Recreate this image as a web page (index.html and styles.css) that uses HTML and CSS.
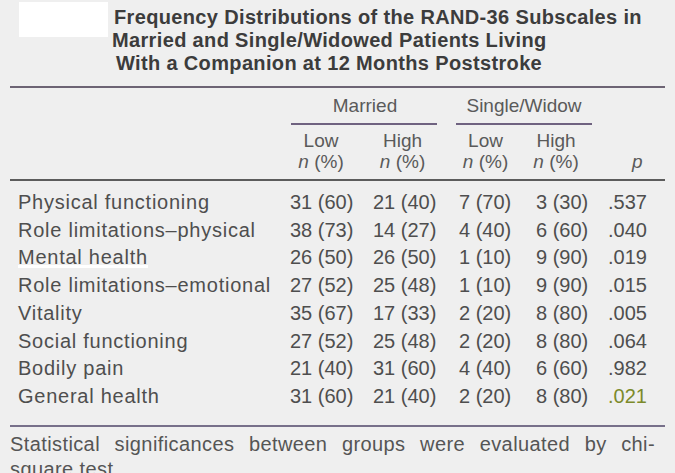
FILE: index.html
```html
<!DOCTYPE html>
<html>
<head>
<meta charset="utf-8">
<link rel="stylesheet" href="styles.css">
</head>
<body>
<div class="page">
  <header class="head">
    <div class="blank"></div>
    <h1 class="title"><span class="t1">Frequency Distributions of the RAND-36 Subscales in</span><br><span class="t2">Married and Single/Widowed Patients Living</span><br><span class="t3">With a Companion at 12 Months Poststroke</span></h1>
  </header>
  <table class="tbl">
    <colgroup>
      <col class="c-label"><col class="c1"><col class="c2"><col class="c3"><col class="c4"><col class="cp">
    </colgroup>
    <thead>
      <tr class="grp">
        <th></th>
        <th colspan="2"><div class="grp-m">Married</div></th>
        <th colspan="2"><div class="grp-s">Single/Widow</div></th>
        <th></th>
      </tr>
      <tr class="sub">
        <th></th>
        <th class="h1">Low<br><i>n</i> (%)</th>
        <th class="h2">High<br><i>n</i> (%)</th>
        <th class="h3">Low<br><i>n</i> (%)</th>
        <th class="h4">High<br><i>n</i> (%)</th>
        <th class="hp"><br><i>p</i></th>
      </tr>
    </thead>
    <tbody>
      <tr><td>Physical functioning</td><td>31 (60)</td><td>21 (40)</td><td>7 (70)</td><td>3 (30)</td><td>.537</td></tr>
      <tr><td>Role limitations–physical</td><td>38 (73)</td><td>14 (27)</td><td>4 (40)</td><td>6 (60)</td><td>.040</td></tr>
      <tr><td><span class="hl">Mental health</span></td><td>26 (50)</td><td>26 (50)</td><td>1 (10)</td><td>9 (90)</td><td>.019</td></tr>
      <tr><td>Role limitations–emotional</td><td>27 (52)</td><td>25 (48)</td><td>1 (10)</td><td>9 (90)</td><td>.015</td></tr>
      <tr><td>Vitality</td><td>35 (67)</td><td>17 (33)</td><td>2 (20)</td><td>8 (80)</td><td>.005</td></tr>
      <tr><td>Social functioning</td><td>27 (52)</td><td>25 (48)</td><td>2 (20)</td><td>8 (80)</td><td>.064</td></tr>
      <tr><td>Bodily pain</td><td>21 (40)</td><td>31 (60)</td><td>4 (40)</td><td>6 (60)</td><td>.982</td></tr>
      <tr><td>General health</td><td>31 (60)</td><td>21 (40)</td><td>2 (20)</td><td>8 (80)</td><td><span class="hl2">.021</span></td></tr>
    </tbody>
  </table>
  <p class="note">Statistical significances between groups were evaluated by chi-square test.</p>
</div>
</body>
</html>
```
FILE: styles.css
```css
html, body {
  margin: 0;
  padding: 0;
}
body {
  background: #efefef;
  width: 675px;
  height: 473px;
  overflow: hidden;
  font-family: "Liberation Sans", Arial, sans-serif;
  color: #4e4e4e;
}
.page {
  padding: 0 10px;
}
.head {
  display: flex;
  align-items: flex-start;
  height: 86px;
}
.blank {
  width: 89px;
  height: 35px;
  margin: 2px 0 0 9px;
  background: #ffffff;
  flex: none;
}
.title {
  margin: 6px 0 0 6px;
  font-family: "Liberation Sans", sans-serif;
  font-weight: bold;
  font-size: 20px;
  line-height: 23px;
  color: #3c3c3c;
  letter-spacing: 0.35px;
}
.t2 { margin-left: -2px; }
.t3 { margin-left: 2px; }
.tbl {
  width: 655px;
  border-collapse: collapse;
  table-layout: fixed;
  border-top: 2px solid #6d6474;
  border-bottom: 2px solid #77708a;
}
.c-label { width: 272px; }
.c1 { width: 83px; }
.c2 { width: 86px; }
.c3 { width: 77px; }
.c4 { width: 72px; }
.cp { width: 65px; }

thead th {
  font-weight: normal;
  font-size: 19px;
  color: #5a5a5a;
  padding: 0;
}
thead i {
  font-style: italic;
}
.grp th {
  padding-top: 7px;
  vertical-align: bottom;
}
.grp-m, .grp-s {
  text-align: center;
  line-height: 22px;
  padding-bottom: 6px;
  border-bottom: 2px solid #6f6280;
}
.grp-m {
  margin: 0 14px 0 9px;
  padding-left: 2px;
}
.grp-s {
  margin: 0 8px 0 5px;
}
.sub th {
  line-height: 21px;
  padding-top: 5px;
  padding-bottom: 7px;
  text-align: center;
  border-bottom: 2px solid #5c5c5c;
}
.sub .h1 { padding-left: 8px; padding-right: 13px; }
.sub .h2 { padding-left: 7px; padding-right: 18px; }
.sub .h3 { padding-left: 8px; padding-right: 16px; }
.sub .h4 { padding-left: 4px; padding-right: 20px; }
.sub .hp { text-align: left; padding-left: 32px; }

tbody td {
  font-size: 20px;
  line-height: 27.7px;
  padding: 0 0 0 8px;
  white-space: nowrap;
}
tbody td:first-child {
  letter-spacing: 0.75px;
}
tbody tr:first-child td { padding-top: 8px; }
tbody tr:last-child td { padding-bottom: 14px; }
.hl {
  box-shadow: inset 0 -3px 0 #ffffff;
}
.hl2 {
  color: #7c8a2a;
}
.note {
  margin: 5px 0 0 0;
  width: 645px;
  font-size: 20px;
  line-height: 25px;
  text-align: justify;
  letter-spacing: 0.4px;
  color: #555555;
}
```
